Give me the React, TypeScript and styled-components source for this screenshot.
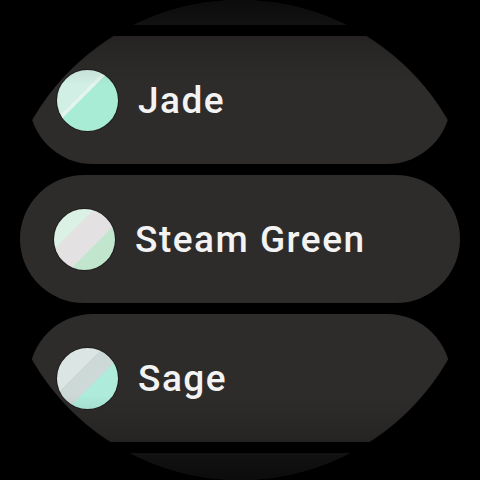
import { createGlobalStyle, styled } from 'styled-components';

const GlobalStyle = createGlobalStyle`
  html, body {
    margin: 0;
    padding: 0;
    background: #000;
  }

  body {
    font-family: Roboto, 'Noto Sans', 'Liberation Sans', sans-serif;
  }
`;

const SScreen = styled.div`
  position: relative;
  width: 480px;
  height: 480px;
  overflow: hidden;
  border-radius: 50%;
  background: #000;

  &::after {
    content: '';
    position: absolute;
    inset: 0;
    pointer-events: none;
    background: linear-gradient(
      to bottom,
      rgba(0, 0, 0, 0.55) 0,
      rgba(0, 0, 0, 0.15) 45px,
      rgba(0, 0, 0, 0) 85px,
      rgba(0, 0, 0, 0) 395px,
      rgba(0, 0, 0, 0.15) 435px,
      rgba(0, 0, 0, 0.55) 480px
    );
  }
`;

const SList = styled.div`
  display: flex;
  flex-direction: column;
  align-items: center;
  gap: 11px;
  margin-top: -103px;
`;

const SChip = styled.div<{ $edge?: boolean; $faded?: boolean }>`
  box-sizing: border-box;
  display: flex;
  align-items: center;
  gap: 20px;
  flex-shrink: 0;
  width: ${({ $edge }) => ($edge ? '422px' : '440px')};
  height: 128px;
  padding-left: ${({ $edge }) => ($edge ? '28px' : '34px')};
  border-radius: 64px;
  background: #2e2c2b;
  opacity: ${({ $faded }) => ($faded ? 0.6 : 1)};
`;

const SSwatch = styled.span<{ $stops: string }>`
  flex-shrink: 0;
  width: 61px;
  height: 61px;
  border-radius: 50%;
  box-shadow: 0 0 0 1px rgba(0, 0, 0, 0.35);
  background: linear-gradient(135deg, ${({ $stops }) => $stops});
`;

const SLabel = styled.span`
  color: #f3f3f3;
  font-size: 37px;
  font-weight: 500;
  letter-spacing: 1.5px;
  white-space: nowrap;
`;

type Colour = {
  name: string;
  stops: string;
  edge?: boolean;
  faded?: boolean;
};

const colours: Colour[] = [
  { name: '', stops: '#dbe4e2 0 50%, #aeeadb 50%', edge: true, faded: true },
  { name: 'Jade', stops: '#d2efe6 0 40%, #e2f4ed 40% 44%, #a9ecd6 44%', edge: true },
  { name: 'Steam Green', stops: '#dbf1e6 0 33%, #e3e1e2 33% 63%, #c1e5cd 63%' },
  { name: 'Sage', stops: '#dbe5e3 0 37%, #ccd9d6 37% 59%, #aeebdb 59%', edge: true },
  { name: '', stops: '#dbe4e2 0 50%, #aeeadb 50%', edge: true, faded: true },
];

const App = () => (
  <>
    <GlobalStyle />
    <SScreen>
      <SList>
        {colours.map((colour, index) => (
          <SChip key={index} $edge={colour.edge} $faded={colour.faded}>
            {colour.name && (
              <>
                <SSwatch $stops={colour.stops} />
                <SLabel>{colour.name}</SLabel>
              </>
            )}
          </SChip>
        ))}
      </SList>
    </SScreen>
  </>
);

export default App;
